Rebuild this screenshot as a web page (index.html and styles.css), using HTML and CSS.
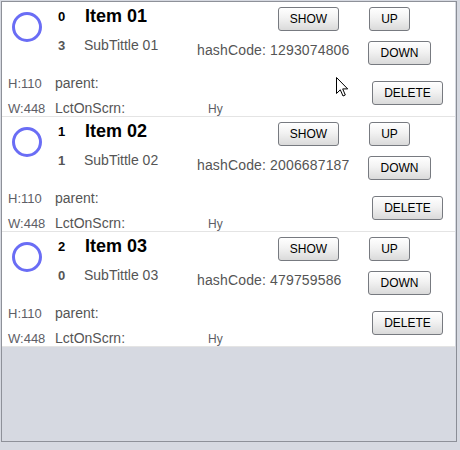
FILE: index.html
```html
<!DOCTYPE html>
<html>
<head>
<meta charset="utf-8">
<link rel="stylesheet" href="styles.css">
</head>
<body>
<div class="frame">
  <div class="row">
    <div class="icon"><svg width="30" height="30" viewBox="0 0 30 30"><circle cx="15" cy="15" r="13.5" fill="none" stroke="#6a6df5" stroke-width="3"/></svg></div>
    <div class="num n1">0</div>
    <div class="title">Item 01</div>
    <button class="btn show">SHOW</button>
    <button class="btn up">UP</button>
    <div class="num n2">3</div>
    <div class="sub">SubTittle 01</div>
    <div class="hash">hashCode: 1293074806</div>
    <button class="btn down">DOWN</button>
    <div class="meta h">H:110</div>
    <div class="lbl parent">parent:</div>
    <button class="btn del">DELETE</button>
    <div class="meta w">W:448</div>
    <div class="lbl lct">LctOnScrn:</div>
    <div class="meta hy">Hy</div>
  </div>
  <div class="row">
    <div class="icon"><svg width="30" height="30" viewBox="0 0 30 30"><circle cx="15" cy="15" r="13.5" fill="none" stroke="#6a6df5" stroke-width="3"/></svg></div>
    <div class="num n1">1</div>
    <div class="title">Item 02</div>
    <button class="btn show">SHOW</button>
    <button class="btn up">UP</button>
    <div class="num n2">1</div>
    <div class="sub">SubTittle 02</div>
    <div class="hash">hashCode: 2006687187</div>
    <button class="btn down">DOWN</button>
    <div class="meta h">H:110</div>
    <div class="lbl parent">parent:</div>
    <button class="btn del">DELETE</button>
    <div class="meta w">W:448</div>
    <div class="lbl lct">LctOnScrn:</div>
    <div class="meta hy">Hy</div>
  </div>
  <div class="row">
    <div class="icon"><svg width="30" height="30" viewBox="0 0 30 30"><circle cx="15" cy="15" r="13.5" fill="none" stroke="#6a6df5" stroke-width="3"/></svg></div>
    <div class="num n1">2</div>
    <div class="title">Item 03</div>
    <button class="btn show">SHOW</button>
    <button class="btn up">UP</button>
    <div class="num n2">0</div>
    <div class="sub">SubTittle 03</div>
    <div class="hash">hashCode: 479759586</div>
    <button class="btn down">DOWN</button>
    <div class="meta h">H:110</div>
    <div class="lbl parent">parent:</div>
    <button class="btn del">DELETE</button>
    <div class="meta w">W:448</div>
    <div class="lbl lct">LctOnScrn:</div>
    <div class="meta hy">Hy</div>
  </div>
  <svg class="cursor" width="13" height="21" viewBox="0 0 13 21"><path d="M0.5 0.5 L0.5 16.5 L4.3 12.8 L7 19 L9.3 18 L6.7 11.9 L11.7 11.9 Z" fill="#fff" stroke="#000" stroke-width="1" stroke-linejoin="miter"/></svg>
</div>
</body>
</html>
```
FILE: styles.css
```css
html, body {
  margin: 0;
  padding: 0;
  background: #d6d9e1;
}
body {
  font-family: "Liberation Sans", Arial, sans-serif;
  width: 460px;
  height: 450px;
  overflow: hidden;
}
.frame {
  position: relative;
  margin: 1px 0 0 1px;
  width: 454px;
  height: 439px;
  border: 1px solid #8e9199;
  border-right-color: #8a8e96;
  background: #d6d9e1;
  box-sizing: content-box;
}
.row {
  display: grid;
  grid-template-columns: 53px 29px 113px 81px 90px 1fr;
  grid-template-rows: 34px 34px 24px 22px;
  width: 453px;
  height: 114px;
  background: #fff;
  border-bottom: 1px solid #e4e4e4;
  overflow: hidden;
}
.row > * { align-self: start; justify-self: start; }
.icon {
  grid-column: 1;
  grid-row: 1 / 3;
  margin: 10px 0 0 10px;
  width: 30px;
  height: 30px;
}
.icon svg { display: block; }
.num {
  grid-column: 2;
  font-size: 13px;
  line-height: 15px;
  font-weight: bold;
  margin-left: 3px;
}
.n1 { grid-row: 1; margin-top: 7px; color: #000; }
.n2 { grid-row: 2; margin-top: 2px; color: #555; }
.title {
  grid-column: 3;
  grid-row: 1;
  font-size: 18px;
  line-height: 20px;
  font-weight: bold;
  color: #000;
  margin: 4px 0 0 1px;
}
.sub {
  grid-column: 3;
  grid-row: 2;
  font-size: 14px;
  line-height: 16px;
  color: #555;
  margin-top: 1px;
}
.hash {
  grid-column: 4 / 6;
  grid-row: 2;
  font-size: 14px;
  line-height: 16px;
  color: #555;
  margin-top: 6px;
  letter-spacing: 0.15px;
  white-space: nowrap;
}
.lbl {
  font-size: 14px;
  line-height: 16px;
  color: #555;
  white-space: nowrap;
}
.parent { grid-column: 2 / 5; grid-row: 3; margin-top: 5px; }
.lct { grid-column: 2 / 4; grid-row: 4; margin-top: 6px; }
.meta {
  font-size: 12px;
  line-height: 14px;
  color: #5e5e66;
  white-space: nowrap;
}
.h, .w { font-size: 13px; }
.h { grid-column: 1; grid-row: 3; margin: 7px 0 0 6px; }
.w { grid-column: 1; grid-row: 4; margin: 8px 0 0 6px; }
.hy { grid-column: 4; grid-row: 4; margin: 8px 0 0 11px; }
.btn {
  font-family: "Liberation Sans", Arial, sans-serif;
  font-size: 12px;
  color: #000;
  height: 24px;
  padding: 0;
  border: 1px solid #777a80;
  border-radius: 3px;
  background: linear-gradient(#ffffff, #f2f2f2 45%, #dadada);
  box-shadow: inset 0 1px 0 #fff;
  line-height: 22px;
  text-align: center;
}
.show { grid-column: 5; grid-row: 1; width: 61px; margin-top: 5px; }
.up { grid-column: 6; grid-row: 1; width: 41px; margin: 5px 0 0 1px; }
.down { grid-column: 6; grid-row: 2; width: 63px; margin-top: 5px; }
.del { grid-column: 6; grid-row: 3 / 5; width: 71px; margin: 11px 0 0 4px; }
.cursor {
  position: absolute;
  left: 334px;
  top: 75px;
}
```
